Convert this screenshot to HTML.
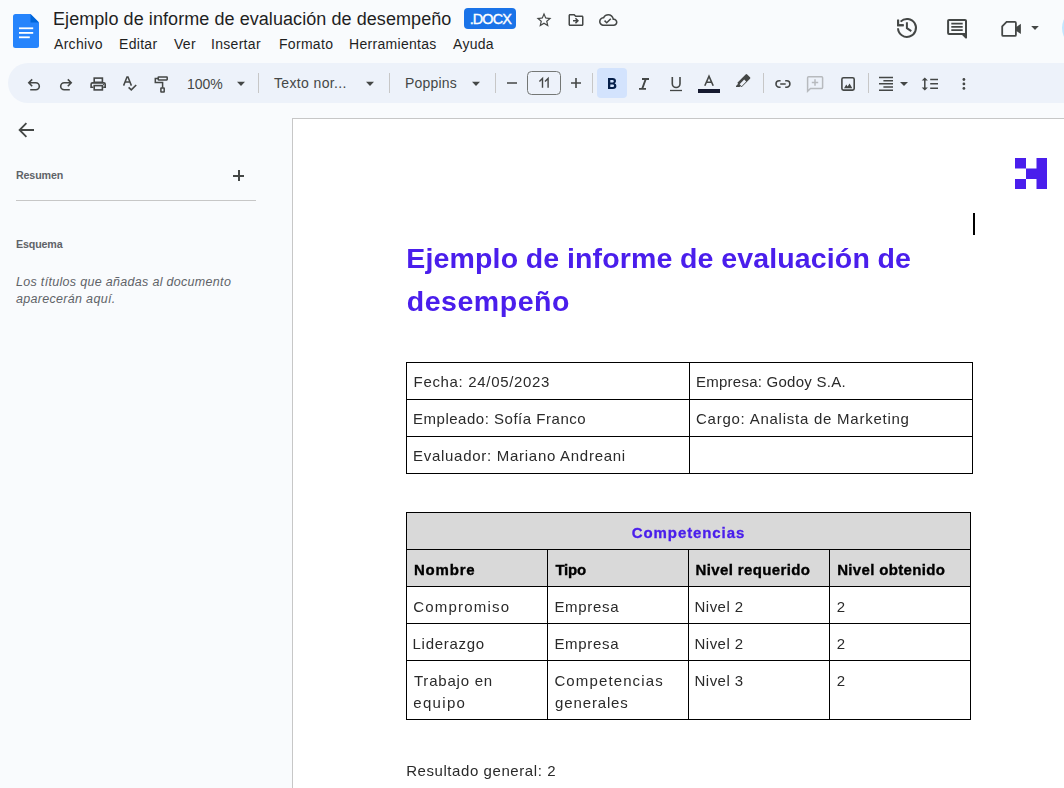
<!DOCTYPE html>
<html><head><meta charset="utf-8">
<style>
*{box-sizing:border-box}
html,body{margin:0;padding:0}
body{width:1064px;height:788px;overflow:hidden;position:relative;background:#f9fbfd;font-family:"Liberation Sans",sans-serif;color:#1f1f1f}
.a{position:absolute;white-space:pre}
.ic{position:absolute;display:block}
.menu{top:36px;font-size:14px;color:#1f1f1f;letter-spacing:0.3px}
.tb{position:absolute;left:8px;top:63px;width:1080px;height:40px;border-radius:20px;background:#edf2fa}
.sep{position:absolute;top:73px;width:1px;height:20px;background:#c7c7c7}
.tbt{top:76px;font-size:14px;color:#444746}
.page{position:absolute;left:292px;top:118px;width:800px;height:700px;background:#fff;border-left:1px solid #c7c7c7;border-top:1px solid #c7c7c7}
.hl{position:absolute;height:1px;background:#000}
.vl{position:absolute;width:1px;background:#000}
.ct{position:absolute;white-space:pre;font-size:14.5px;letter-spacing:0.75px;color:#1a1a1a}
.b{font-weight:bold}
</style></head><body>

<!-- Docs logo -->
<svg class="ic" style="left:13px;top:14px" width="26" height="34" viewBox="0 0 26 34">
  <path d="M2.5 0H17.5L26 8.5V31.5Q26 34 23.5 34H2.5Q0 34 0 31.5V2.5Q0 0 2.5 0Z" fill="#2684fc"/>
  <path d="M17.5 0L26 8.5H17.5Z" fill="#0066da"/>
  <rect x="6" y="13.4" width="14.2" height="1.8" fill="#fff"/>
  <rect x="6" y="18" width="14.2" height="1.8" fill="#fff"/>
  <rect x="6" y="22.4" width="10.8" height="1.8" fill="#fff"/>
</svg>

<div class="a" style="left:53px;top:9px;font-size:18px;color:#1f1f1f;letter-spacing:0.07px">Ejemplo de informe de evaluación de desempeño</div>
<div class="a" style="left:464px;top:8px;width:52px;height:21px;border-radius:4px;background:#1a73e8;color:#fff;font-size:14.4px;font-weight:normal;-webkit-text-stroke:0.4px #fff;text-align:center;line-height:23.6px;letter-spacing:-0.9px;text-indent:0.6px">.DOCX</div>

<!-- star / folder / cloud -->
<svg class="ic" style="left:535px;top:11px" width="18" height="18" viewBox="0 0 24 24"><path d="M22 9.24l-7.19-.62L12 2 9.19 8.63 2 9.24l5.46 4.73L5.82 21 12 17.27 18.18 21l-1.63-7.03L22 9.24zM12 15.4l-3.76 2.27 1-4.28-3.32-2.88 4.38-.38L12 6.1l1.71 4.04 4.38.38-3.32 2.88 1 4.28L12 15.4z" fill="#444746"/></svg>
<svg class="ic" style="left:567px;top:11px" width="18" height="18" viewBox="0 0 24 24"><path d="M20 6h-8l-2-2H4c-1.1 0-2 .9-2 2v12c0 1.1.9 2 2 2h16c1.1 0 2-.9 2-2V8c0-1.1-.9-2-2-2zm0 12H4V6h5.17l2 2H20v10zm-8.01-9l-1.41 1.41L12.16 12H8v2h4.16l-1.59 1.59L11.99 17 16 13.01 11.99 9z" fill="#444746"/></svg>
<svg class="ic" style="left:599px;top:11px" width="18.5" height="18" viewBox="0 0 24 24" preserveAspectRatio="none"><path d="M19.35 10.04C18.67 6.59 15.64 4 12 4 9.11 4 6.6 5.64 5.35 8.04 2.34 8.36 0 10.91 0 14c0 3.31 2.69 6 6 6h13c2.76 0 5-2.24 5-5 0-2.64-2.05-4.78-4.65-4.96zM19 18H6c-2.21 0-4-1.79-4-4 0-2.05 1.53-3.76 3.56-3.97l1.07-.11.5-.95C8.08 7.14 9.94 6 12 6c2.62 0 4.88 1.86 5.39 4.43l.3 1.5 1.53.11c1.56.1 2.78 1.41 2.78 2.96 0 1.65-1.35 3-3 3zm-9-3.82l-2.09-2.09L6.5 13.5 10 17l6.01-6.01-1.41-1.41z" fill="#444746"/></svg>

<!-- menu -->
<div class="a menu" style="left:54px">Archivo</div>
<div class="a menu" style="left:119px">Editar</div>
<div class="a menu" style="left:174px">Ver</div>
<div class="a menu" style="left:211px">Insertar</div>
<div class="a menu" style="left:279px">Formato</div>
<div class="a menu" style="left:349px">Herramientas</div>
<div class="a menu" style="left:453px">Ayuda</div>

<!-- right header icons -->
<svg class="ic" style="left:880px;top:0" width="184" height="60" viewBox="880 0 184 60">
<g fill="none" stroke="#444746" stroke-width="2">
<path d="M898 28.3A9 9 0 1 0 900.6 21.6"/>
<path d="M898.1 20V25.3H903.5"/>
<path d="M906.9 22.2V28.2L911.3 31.2"/>
<path d="M948.1 20.8Q948.1 19.9 949 19.9H965Q966 19.9 966 20.8V37.6L962.3 33.9H949Q948.1 33.9 948.1 33H948.1Z" stroke-linejoin="round"/>
<path d="M951.3 23.6H962.7M951.3 26.9H962.7M951.3 30.2H962.7" stroke-width="1.7"/>
<path d="M1006.6 21.9H1014.9Q1015.9 21.9 1015.9 22.9V34.9Q1015.9 35.9 1014.9 35.9H1003.2Q1002.2 35.9 1002.2 34.9V26.3Z" stroke-width="1.8"/>
</g>
<g fill="#444746">
<path d="M1016 27.2L1020.9 23.8V34.1L1016 30.8Z"/><path d="M961.5 33H967V38.6Z"/><path d="M897.1 19.6H899.1V24.3H903.8V26.3H897.1Z"/>
<path d="M1031.2 26.1H1038.8L1035 29.9Z"/>
</g>
</svg>
<div class="a" style="left:1062px;top:8px;width:100px;height:40px;border-radius:20px;background:#c2e7ff"></div>

<!-- toolbar -->
<div class="tb"></div>
<svg class="ic" style="left:0;top:63px" width="1064" height="40" viewBox="0 63 1064 40">
<g fill="none" stroke="#444746" stroke-width="1.6">
<path d="M32.2 79.4L28.8 82.8L32.2 86.2M29 82.8H35.8A3.5 3.5 0 0 1 35.8 89.8H30.2"/>
<path d="M67.8 79.4L71.2 82.8L67.8 86.2M71 82.8H64.2A3.5 3.5 0 0 0 64.2 89.8H69.8"/>
<rect x="94.2" y="78.1" width="8.2" height="4.2"/>
<path d="M93.4 87.3H91.1V84.3Q91.1 82.9 92.5 82.9H103.8Q105.2 82.9 105.2 84.3V87.3H103.2"/>
<rect x="94.2" y="85.6" width="8.2" height="4.3" fill="#edf2fa"/>
<path d="M123.6 85.6L127 77H128L131.4 85.6M125.1 82H129.9" stroke-width="1.5"/>
<path d="M128.6 87.3L131.3 89.9L136.2 85"/>
<rect x="158.2" y="77" width="9" height="3" rx="0.4" stroke-width="1.5"/>
<path d="M158.2 78.5H155.3V82.6H162.6V87.8" stroke-width="1.5"/>
<rect x="160.9" y="88" width="3.3" height="4.1" rx="0.3" stroke-width="1.5"/>
<path d="M507 83H517M571 83H581M576 78V88"/>
<path d="M672.3 77V83.7A3.85 3.85 0 0 0 680 83.7V77"/>
<path d="M670 90.5H682" stroke-width="1.3"/>
<path d="M704.8 85.8L709 76.3L713.2 85.8M706.4 82.2H711.6" stroke-width="1.6"/>
<path d="M780.6 80.8H779.2A3.2 3.2 0 0 0 779.2 87.2H780.6M785.2 80.8H786.7A3.2 3.2 0 0 1 786.7 87.2H785.2M780.2 84H785.7"/>
<rect x="841.9" y="77.7" width="12.3" height="12.4" rx="1.6"/>
<path d="M879 77.5H893M883.4 80.7H893M879 83.8H893M883.4 87H893M879 90.2H893" stroke-width="1.5"/>
<path d="M930.2 79.5H938M930.2 83.8H938M930.2 88.3H938M924.8 80V88" stroke-width="1.5"/>
</g>
<g fill="none" stroke="#b7babe" stroke-width="1.5">
<path d="M807.6 91.3V77.8Q807.6 76.8 808.6 76.8H821.6Q822.6 76.8 822.6 77.8V87.4Q822.6 88.4 821.6 88.4H810.5Z"/>
<path d="M815 79.3V85.7M811.8 82.5H818.2"/>
</g>
<g fill="#444746">
<path d="M237 81.8H245L241 86Z"/><path d="M366 81.8H374L370 86Z"/><path d="M472 81.8H480L476 86Z"/><path d="M900 81.9H908L904 86Z"/>
<circle cx="103.6" cy="84.6" r="0.7"/>
<path d="M642 78.1H649V79.9H646.4L643.5 88H646V89.8H639V88H641.5L644.4 79.9H642Z"/>
<path d="M844 88.3L846.3 84.6L847.6 86.5L849.6 83.6L852.3 88.3Z"/>
<path d="M736 86L738.2 83.8L737.6 83.2Q737.2 82.8 737.6 82.4L745.6 74.4Q746.4 73.6 747.2 74.4L750 77.2Q750.8 78 750 78.8L742 86.8Q741.6 87.2 741.2 86.8L740.6 86.2L740.2 86.6Q739.9 86.9 739.5 86.9H736Z"/>
<path d="M921.7 80.6L924.8 77.6L927.9 80.6ZM921.7 87.6L924.8 90.6L927.9 87.6Z"/>
<circle cx="963.9" cy="79.5" r="1.4"/><circle cx="963.9" cy="83.9" r="1.4"/><circle cx="963.9" cy="88.4" r="1.4"/>
</g>
<path d="M739.6 84.2L744.2 79.6L746.2 81.6L741.6 86.2Z" fill="#edf2fa"/>
<g fill="#c7c7c7"><rect x="258" y="73" width="1" height="20"/><rect x="389" y="73" width="1" height="20"/><rect x="495" y="73" width="1" height="20"/><rect x="592" y="73" width="1" height="20"/><rect x="763" y="73" width="1" height="20"/><rect x="868" y="73" width="1" height="20"/></g>
<rect x="527.5" y="71.5" width="33" height="23" rx="4" fill="none" stroke="#747775" stroke-width="1"/>
<rect x="597" y="68" width="30" height="30" rx="4" fill="#d3e3fd"/>
<path fill="#041e49" fill-rule="evenodd" d="M608 78H612.6Q616 78 616 80.9Q616 82.6 614.6 83.3Q616.4 84 616.4 86.1Q616.4 89 612.9 89H608ZM610.3 80V82.6H612.4Q613.8 82.6 613.8 81.3Q613.8 80 612.4 80ZM610.3 84.5V87H612.6Q614.1 87 614.1 85.75Q614.1 84.5 612.6 84.5Z"/>
<rect x="698" y="89" width="22" height="4" fill="#161a30"/>
</svg>
<div class="a tbt" style="left:187px;top:76px">100%</div>
<div class="a tbt" style="left:274px;top:75px;letter-spacing:0.36px">Texto nor...</div>
<div class="a tbt" style="left:405px;top:75px;letter-spacing:0.2px">Poppins</div>
<svg class="ic" style="left:530px;top:70px" width="30" height="26" viewBox="530 70 30 26"><path d="M539.4 81.4L542.5 78.4V87.8M545 81.4L548.1 78.4V87.8" fill="none" stroke="#444746" stroke-width="1.4"/></svg>


<!-- sidebar -->
<svg class="ic" style="left:0;top:110px" width="60" height="40" viewBox="0 110 60 40"><path d="M34 130H19.8M26.4 123.2L19.6 130L26.4 136.8" fill="none" stroke="#444746" stroke-width="1.8"/></svg>
<div class="a" style="left:16px;top:169px;font-size:10.7px;font-weight:bold;color:#5f6368;letter-spacing:-0.15px">Resumen</div>
<div class="a" style="left:233px;top:175px;width:11px;height:2px;background:#444746"></div>
<div class="a" style="left:238px;top:170px;width:2px;height:11px;background:#444746"></div>
<div class="a" style="left:16px;top:200px;width:240px;height:1px;background:#c7c7c7"></div>
<div class="a" style="left:16px;top:238px;font-size:10.7px;font-weight:bold;color:#5f6368;letter-spacing:-0.15px">Esquema</div>
<div class="a" style="left:16px;top:274.3px;font-size:12.5px;font-style:italic;color:#5f6368;line-height:16.5px;letter-spacing:0.31px">Los títulos que añadas al documento
aparecerán aquí.</div>

<!-- page -->
<div class="page"></div>
<div id="doc"></div><!--DOC-->
<div style="position:absolute;left:0;top:0;width:1064px;height:788px;will-change:transform">
<svg class="ic" style="left:1015px;top:158px" width="32" height="31" viewBox="0 0 32 31"><g fill="#4a1eec">
<path d="M0 0H11V10.5H0ZM11 10.5H21.5V0H32V31H21.5V21H11ZM0 21H11V31H0Z"/></g></svg>
<div class="a" style="left:973px;top:213px;width:2px;height:22px;background:#000"></div>
<div class="a" style="left:406.3px;top:242.34px;font-size:28.5px;line-height:32.77px;font-weight:bold;color:#4a1eec;letter-spacing:0.15px;word-spacing:-0.5px">Ejemplo de informe de evaluación de</div>
<div class="a" style="left:406.8px;top:284.94px;font-size:28.5px;line-height:32.77px;font-weight:bold;color:#4a1eec;letter-spacing:0.52px">desempeño</div>
<div class="a" style="left:406px;top:362px;width:567px;height:1px;background:#000"></div>
<div class="a" style="left:406px;top:399px;width:567px;height:1px;background:#000"></div>
<div class="a" style="left:406px;top:436px;width:567px;height:1px;background:#000"></div>
<div class="a" style="left:406px;top:473px;width:567px;height:1px;background:#000"></div>
<div class="a" style="left:406px;top:362px;width:1px;height:112px;background:#000"></div>
<div class="a" style="left:689px;top:362px;width:1px;height:112px;background:#000"></div>
<div class="a" style="left:972px;top:362px;width:1px;height:112px;background:#000"></div>
<div class="a" style="left:413.56px;top:372.88px;font-size:15px;line-height:17.25px;color:#2a2a2a;letter-spacing:0.675px">Fecha: 24/05/2023</div>
<div class="a" style="left:696.0px;top:372.88px;font-size:15px;line-height:17.25px;color:#2a2a2a;letter-spacing:0.250px">Empresa: Godoy S.A.</div>
<div class="a" style="left:413.0px;top:410.18px;font-size:15px;line-height:17.25px;color:#2a2a2a;letter-spacing:0.517px">Empleado: Sofía Franco</div>
<div class="a" style="left:696.0px;top:410.18px;font-size:15px;line-height:17.25px;color:#2a2a2a;letter-spacing:0.754px">Cargo: Analista de Marketing</div>
<div class="a" style="left:413.0px;top:446.98px;font-size:15px;line-height:17.25px;color:#2a2a2a;letter-spacing:0.719px">Evaluador: Mariano Andreani</div>
<div class="a" style="left:406px;top:512px;width:565px;height:74px;background:#d9d9d9"></div>
<div class="a" style="left:406px;top:512px;width:565px;height:1px;background:#000"></div>
<div class="a" style="left:406px;top:549px;width:565px;height:1px;background:#000"></div>
<div class="a" style="left:406px;top:586px;width:565px;height:1px;background:#000"></div>
<div class="a" style="left:406px;top:623px;width:565px;height:1px;background:#000"></div>
<div class="a" style="left:406px;top:660px;width:565px;height:1px;background:#000"></div>
<div class="a" style="left:406px;top:719px;width:565px;height:1px;background:#000"></div>
<div class="a" style="left:406px;top:512px;width:1px;height:208px;background:#000"></div>
<div class="a" style="left:970px;top:512px;width:1px;height:208px;background:#000"></div>
<div class="a" style="left:547px;top:549px;width:1px;height:171px;background:#000"></div>
<div class="a" style="left:688px;top:549px;width:1px;height:171px;background:#000"></div>
<div class="a" style="left:829px;top:549px;width:1px;height:171px;background:#000"></div>
<div class="a" style="left:406px;top:524.08px;width:565px;text-align:center;font-size:15px;line-height:17.25px;font-weight:bold;color:#4a1eec;letter-spacing:0.9px;-webkit-text-stroke:0.3px #4a1eec">Competencias</div>
<div class="a" style="left:414.0px;top:561.48px;font-size:15px;line-height:17.25px;color:#000;letter-spacing:0.790px;font-weight:bold;-webkit-text-stroke:0.35px #000">Nombre</div>
<div class="a" style="left:555.42px;top:561.48px;font-size:15px;line-height:17.25px;color:#000;letter-spacing:-0.183px;font-weight:bold;-webkit-text-stroke:0.35px #000">Tipo</div>
<div class="a" style="left:695.58px;top:561.48px;font-size:15px;line-height:17.25px;color:#000;letter-spacing:0.364px;font-weight:bold;-webkit-text-stroke:0.35px #000">Nivel requerido</div>
<div class="a" style="left:837.14px;top:561.48px;font-size:15px;line-height:17.25px;color:#000;letter-spacing:0.350px;font-weight:bold;-webkit-text-stroke:0.35px #000">Nivel obtenido</div>
<div class="a" style="left:413.28px;top:598.18px;font-size:15px;line-height:17.25px;color:#2a2a2a;letter-spacing:1.206px">Compromiso</div>
<div class="a" style="left:554.42px;top:598.18px;font-size:15px;line-height:17.25px;color:#2a2a2a;letter-spacing:0.683px">Empresa</div>
<div class="a" style="left:694.58px;top:598.18px;font-size:15px;line-height:17.25px;color:#2a2a2a;letter-spacing:0.450px">Nivel 2</div>
<div class="a" style="left:836.84px;top:598.18px;font-size:15px;line-height:17.25px;color:#2a2a2a;letter-spacing:0.850px">2</div>
<div class="a" style="left:412.58px;top:635.18px;font-size:15px;line-height:17.25px;color:#2a2a2a;letter-spacing:0.700px">Liderazgo</div>
<div class="a" style="left:554.42px;top:635.18px;font-size:15px;line-height:17.25px;color:#2a2a2a;letter-spacing:0.683px">Empresa</div>
<div class="a" style="left:694.58px;top:635.18px;font-size:15px;line-height:17.25px;color:#2a2a2a;letter-spacing:0.450px">Nivel 2</div>
<div class="a" style="left:836.84px;top:635.18px;font-size:15px;line-height:17.25px;color:#2a2a2a;letter-spacing:0.850px">2</div>
<div class="a" style="left:413.98px;top:672.08px;font-size:15px;line-height:17.25px;color:#2a2a2a;letter-spacing:0.783px">Trabajo en</div>
<div class="a" style="left:554.42px;top:672.08px;font-size:15px;line-height:17.25px;color:#2a2a2a;letter-spacing:1.123px">Competencias</div>
<div class="a" style="left:694.58px;top:672.08px;font-size:15px;line-height:17.25px;color:#2a2a2a;letter-spacing:0.450px">Nivel 3</div>
<div class="a" style="left:836.84px;top:672.08px;font-size:15px;line-height:17.25px;color:#2a2a2a;letter-spacing:0.850px">2</div>
<div class="a" style="left:413.28px;top:693.58px;font-size:15px;line-height:17.25px;color:#2a2a2a;letter-spacing:1.330px">equipo</div>
<div class="a" style="left:555.12px;top:693.58px;font-size:15px;line-height:17.25px;color:#2a2a2a;letter-spacing:0.850px">generales</div>
<div class="a" style="left:406.14px;top:762.08px;font-size:15px;line-height:17.25px;color:#2a2a2a;letter-spacing:0.576px">Resultado general: 2</div>
</div><!--/DOC-->

</body></html>
